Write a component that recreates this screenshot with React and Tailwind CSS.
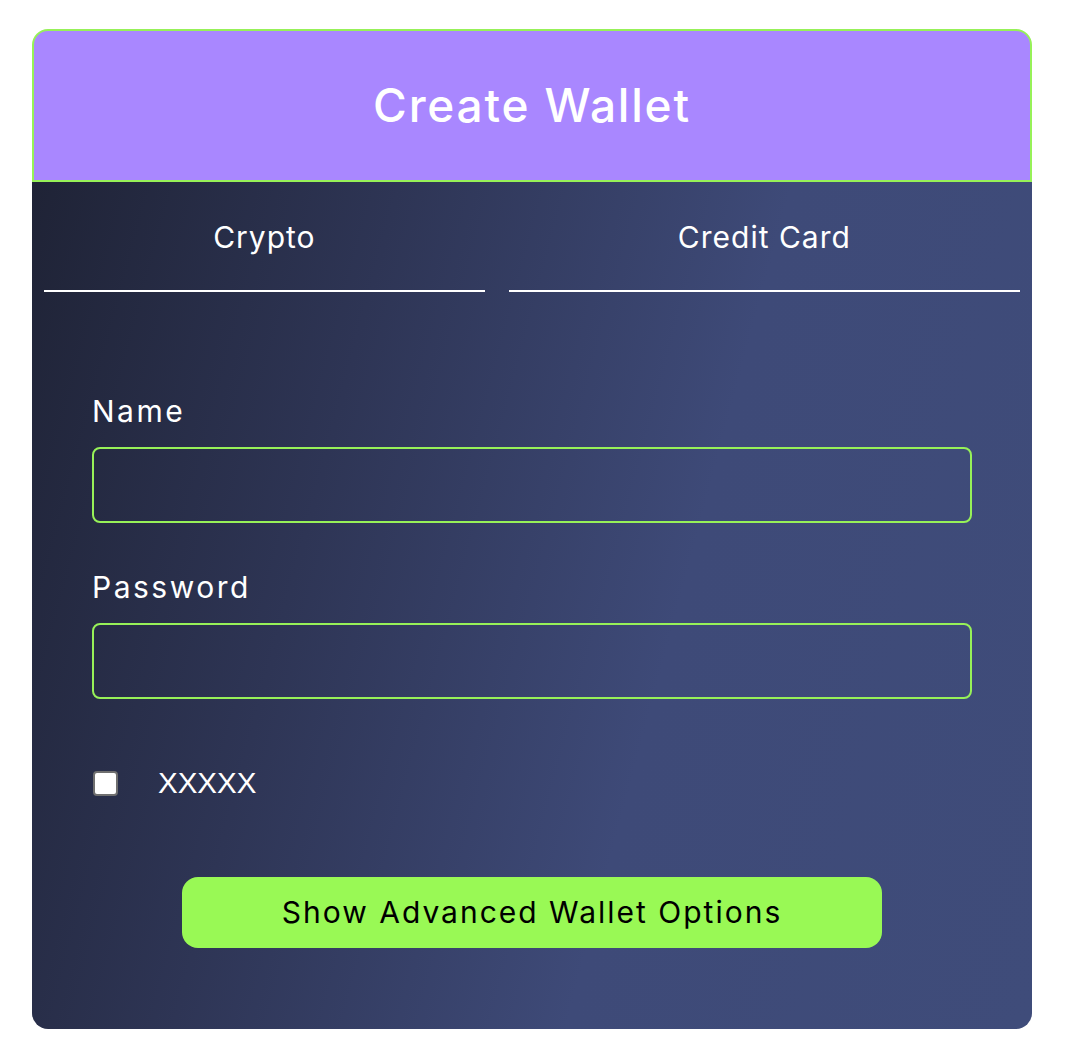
import React from 'react';

const Field = ({ label, type = 'text', className = '' }) => (
  <div className={className}>
    <label className="block text-[30px] leading-[40px] tracking-[2.5px] text-white">{label}</label>
    <input
      type={type}
      className="mt-4 block h-[76px] w-full rounded-lg border-2 border-[#97f158] bg-transparent px-4 text-[24px] text-white outline-none"
    />
  </div>
);

const App = () => {
  return (
    <div className="min-h-screen bg-white pl-8 pt-[29px] pb-6 font-['Inter',sans-serif]">
      <div className="w-[1000px]">
        <div className="flex h-[153px] items-center justify-center rounded-t-2xl border-2 border-[#97f158] bg-[#a987ff]">
          <h1 className="text-[46px] font-medium tracking-[1.8px] text-white">Create Wallet</h1>
        </div>

        <div className="rounded-b-2xl bg-[linear-gradient(105deg,#1f2336_0%,#2e3555_30%,#3e4a78_62%,#3f4c7a_100%)] pb-[81px]">
          <div className="flex gap-6 px-3">
            <button className="flex-auto border-b-2 border-white pt-[35px] pb-[33px] text-[30px] leading-[40px] tracking-[1px] text-white">
              Crypto
            </button>
            <button className="flex-auto border-b-2 border-white pt-[35px] pb-[33px] text-[30px] leading-[40px] tracking-[1px] text-white">
              Credit Card
            </button>
          </div>

          <div className="px-[60px] pt-[99px]">
            <Field label="Name" />
            <Field label="Password" type="password" className="mt-[44px]" />

            <label className="mt-16 flex h-[40px] items-center gap-[40px]">
              <input
                type="checkbox"
                className="ml-px h-[25px] w-[25px] appearance-none rounded-[4px] border-2 border-[#6f6f6f] bg-white"
              />
              <span className="font-['Liberation_Sans',sans-serif] text-[29.5px] text-white">XXXXX</span>
            </label>

            <div className="mt-[74px] flex justify-center">
              <button className="h-[71px] w-[700px] rounded-2xl bg-[#99f955] text-[30px] tracking-[2px] text-black">
                Show Advanced Wallet Options
              </button>
            </div>
          </div>
        </div>
      </div>
    </div>
  );
};

export default App;
